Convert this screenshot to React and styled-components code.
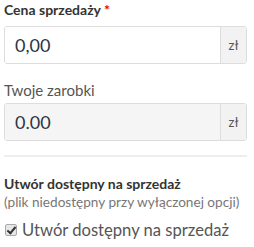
import React from "react";
import styled, { createGlobalStyle } from "styled-components";

const Global = createGlobalStyle`
  html, body { margin: 0; padding: 0; background: #fff; }
  body { font-family: Lato, "Open Sans", sans-serif; color: #333; }
  * { box-sizing: border-box; }
`;

const Wrap = styled.div`
  width: 254px;
  padding: 0 7px 0 4px;
`;

const Group = styled.div`
  margin-bottom: ${(p) => p.$mb || 0}px;
`;

const Label = styled.div`
  font-size: ${(p) => (p.$bold ? 14 : 15)}px;
  font-weight: ${(p) => (p.$bold ? 700 : 400)};
  color: ${(p) => (p.$bold ? "#333" : "#555")};
  line-height: 20px;
  margin-bottom: ${(p) => p.$mb || 0}px;
`;

const Star = styled.span`
  color: #e00;
  margin-left: 3px;
`;

const InputGroup = styled.div`
  display: flex;
  height: 38px;
  border: 1px solid #ddd;
  border-radius: 3px;
  overflow: hidden;
`;

const Field = styled.div`
  flex: 1;
  display: flex;
  align-items: center;
  padding-left: 10px;
  font-size: 18px;
  color: #2c3545;
  background: ${(p) => (p.$disabled ? "#f5f5f5" : "#fff")};
`;

const Addon = styled.div`
  width: 26px;
  display: flex;
  align-items: center;
  justify-content: center;
  border-left: 1px solid #ddd;
  background: #f2f2f2;
  font-size: 13px;
  color: #555;
`;

const Rule = styled.hr`
  border: 0;
  border-top: 2px solid #eee;
  margin: 0 0 18px;
`;

const Title = styled.div`
  font-size: 14px;
  font-weight: 700;
  color: #333;
  line-height: 18px;
`;

const Hint = styled.div`
  font-size: 13.6px;
  color: #777;
  line-height: 18px;
  margin-bottom: 8px;
`;

const CheckRow = styled.label`
  display: flex;
  align-items: center;
  gap: 5px;
  font-size: 16.6px;
  color: #555;
  line-height: 22px;
`;

const Box = styled.input`
  appearance: none;
  margin: 0 0 0 1px;
  width: 12px;
  height: 12px;
  border: 1px solid #aaa;
  border-radius: 2px;
  background: #e6e6e6;
  position: relative;
  &:checked::after {
    content: "";
    position: absolute;
    left: 3px;
    top: 0px;
    width: 3px;
    height: 7px;
    border: solid #333;
    border-width: 0 2px 2px 0;
    transform: rotate(40deg);
  }
`;

export default function App() {
  return (
    <>
      <Global />
      <Wrap>
        <Group $mb={16}>
          <Label $bold $mb={6}>
            Cena sprzedaży<Star>*</Star>
          </Label>
          <InputGroup>
            <Field>0,00</Field>
            <Addon>zł</Addon>
          </InputGroup>
        </Group>
        <Group $mb={14}>
          <Label $mb={3}>Twoje zarobki</Label>
          <InputGroup>
            <Field $disabled>0.00</Field>
            <Addon>zł</Addon>
          </InputGroup>
        </Group>
        <Rule />
        <Title>Utwór dostępny na sprzedaż</Title>
        <Hint>(plik niedostępny przy wyłączonej opcji)</Hint>
        <CheckRow>
          <Box type="checkbox" defaultChecked />
          Utwór dostępny na sprzedaż
        </CheckRow>
      </Wrap>
    </>
  );
}
